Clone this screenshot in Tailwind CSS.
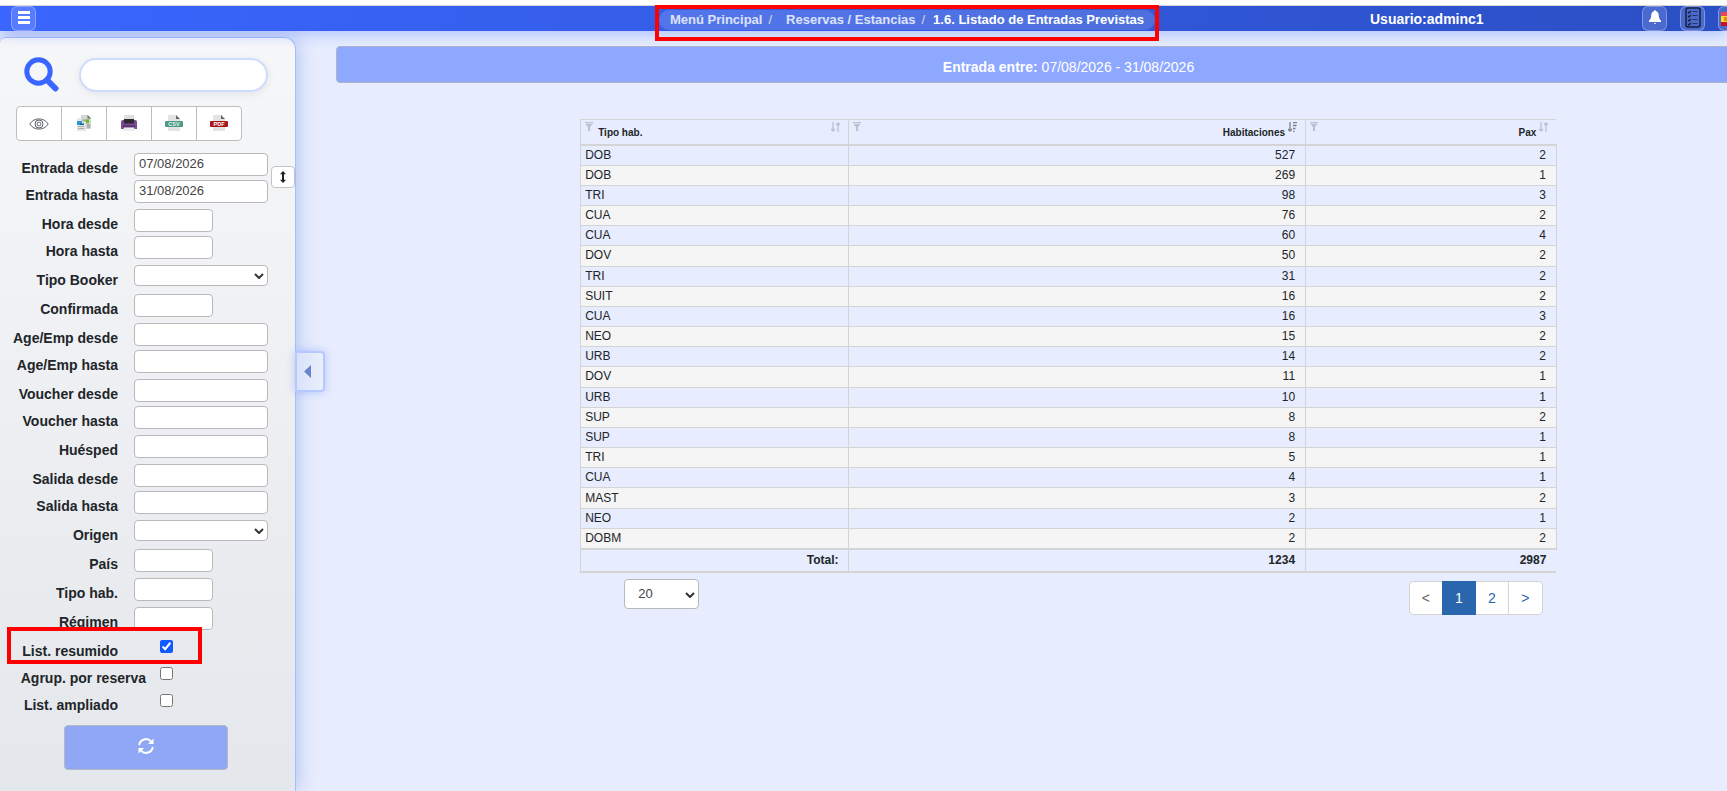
<!DOCTYPE html>
<html lang="es">
<head>
    <meta charset="UTF-8">
    <meta name="viewport" content="width=device-width, initial-scale=1.0">
    <title>Listado de Entradas Previstas</title>
    <script src="https://cdn.jsdelivr.net/npm/@tailwindcss/browser@4"></script>
</head>
<body class="min-h-screen flex flex-col overflow-x-hidden bg-[#e7edfe] text-[#212529] font-['Liberation_Sans',Arial,sans-serif]">

    <!-- Top bar -->
    <header class="relative z-10 border-t-[5px] border-white shadow-[0_4px_14px_rgba(56,98,255,0.3)]">
        <div class="h-[26px] border-t border-[#d6d6d6] grid grid-cols-[659fr_496px_215fr_272fr_85px] bg-linear-to-r from-[#3a66ff] to-[#2b4fc4] text-white font-bold">
            <div class="pl-[11px]">
                <button aria-label="Menú" class="size-[25px] rounded-md border border-white/30 bg-white/15 flex justify-center pt-1">
                    <svg class="w-3 h-[13px]" viewBox="0 0 12 13" fill="#fff"><path d="M0 0h12v3H0zM0 5h12v3H0zM0 10h12v3H0z"/></svg>
                </button>
            </div>
            <nav aria-label="Ruta" class="relative h-[25px] pt-1">
                <div class="h-5 rounded-full bg-white/15 pl-[11px] flex items-center text-[13px] leading-5 whitespace-nowrap">
                    <a href="#" class="text-white/80">Menú Principal</a>
                    <span class="pl-1.5 pr-3.5 font-normal text-[#dcdcdc]">/</span>
                    <a href="#" class="text-white/80">Reservas / Estancias</a>
                    <span class="pl-1.5 pr-2 font-normal text-[#dcdcdc]">/</span>
                    <span>1.6. Listado de Entradas Previstas</span>
                </div>
                <div class="absolute -left-1 -right-1 -top-px h-9 border-4 border-[#ff0000] pointer-events-none"></div>
            </nav>
            <div></div>
            <div class="text-sm leading-[26px] whitespace-nowrap"><span>Usuario:</span><span>adminc1</span></div>
            <div class="flex gap-[13px] overflow-hidden">
                <button aria-label="Avisos" class="size-[25px] shrink-0 rounded-md border border-white/30 bg-white/15 flex justify-center pt-[3px]">
                    <svg class="w-3 h-[15px]" viewBox="0 0 12 15" fill="#fff"><path d="M6 0c.5 0 .8.400.9 1C9 1.600 9.700 3.300 9.800 5.500c.1 2.500.8 4 2.200 5V12H0v-1.500c1.400-1 2.100-2.500 2.200-5C2.300 3.300 3 1.600 5.100 1 5.200.400 5.500 0 6 0zM5 13h2a1 1 0 0 1-2 0z"/></svg>
                </button>
                <button aria-label="Tareas" class="size-[25px] shrink-0 rounded-md border border-white/30 bg-white/15 flex justify-center">
                    <svg class="w-4 h-[21px]" viewBox="0 0 16 21" fill="none" stroke="#16213f"><rect x="1" y="1" width="14" height="19" rx="2" stroke-width="1.500"/><path d="M3 5l1 1 2-2M3 9l1 1 2-2M3 13l1 1 2-2M3 17l1 1 2-2" stroke-width="1.300"/><path d="M7.500 4.500h5M7.500 8.500h5M7.500 12.500h5M7.500 16.500h5" stroke-opacity=".7"/></svg>
                </button>
                <button aria-label="Idioma" class="size-[25px] shrink-0 rounded-md border border-white/30 bg-white/15 flex justify-end pt-[5px]">
                    <svg class="w-[21px] h-[14px]" viewBox="0 0 21 14"><path d="M0 0h21v14H0z" fill="#ffd91a"/><path d="M0 0h21v4H0z" fill="#ee4455"/><path d="M0 10h21v4H0z" fill="#c8102e"/><path d="M3 5h4v4H3z" fill="#d98a1a"/></svg>
                </button>
            </div>
        </div>
    </header>

    <div class="flex-1 flex">
        <!-- Search panel -->
        <aside class="relative mt-1.5 w-[296px] shrink-0 rounded-tr-xl rounded-tl-md border-t border-r border-[#a6bdff] bg-linear-to-b from-[#f6f7f9] to-[#e4e7eb] shadow-[2px_0_18px_rgba(56,98,200,0.3)] pb-5">
            <div class="flex items-center pl-6 pt-[19px]">
                <svg class="size-[35px] shrink-0" viewBox="0 0 35 35" fill="none" stroke="#3a66ff"><circle cx="14.500" cy="14.500" r="11.700" stroke-width="5"/><path d="M23 23l8.500 8.500" stroke-width="6" stroke-linecap="round"/></svg>
                <input type="search" aria-label="Buscar" class="ml-5 w-[189px] h-[34px] rounded-full border-2 border-[#d0dcff] bg-white px-3 text-sm shadow-[0_2px_8px_rgba(0,0,0,0.08)]">
            </div>

            <div class="mt-3.5 ml-4 w-[226px] h-[35px] flex rounded border border-[#bdbdbd] bg-white divide-x divide-[#bdbdbd]">
                <button aria-label="Ver" class="flex-1 flex items-center justify-center">
                    <svg class="w-5 h-3.5" viewBox="0 0 20 14" fill="none" stroke="#59606b"><path d="M.8 7C5 .2 15 .2 19.200 7 15 13.800 5 13.800.8 7z"/><circle cx="10" cy="7" r="4"/><rect x="8.300" y="5.300" width="3.400" height="3.400" rx="1"/></svg>
                </button>
                <button aria-label="Copiar" class="flex-1 flex items-center justify-center">
                    <svg class="w-4 h-[17px]" viewBox="0 0 16 17"><path d="M5 0h7l3 3v11H5z" fill="#d3d6d6"/><path d="M11.500 0L15 3.500h-3.500z" fill="#6e6e6e"/><path d="M7 5l6-1v4l-6 1z" fill="#6cc024"/><path d="M11 9h3v4h-3z" fill="#aeb2b4"/><path d="M1 3h6l3 3.500V16H1z" fill="#e3e6e7"/><path d="M6.500 3L10 6.500H6.500z" fill="#a3a6a8"/><path d="M1 6h5v4H1z" fill="#2f95cf"/><path d="M4 8.500h4V10H4z" fill="#125f93"/><path d="M2 11.500h6M2 13.500h6" stroke="#a9adb0"/></svg>
                </button>
                <button aria-label="Imprimir" class="flex-1 flex items-center justify-center">
                    <svg class="w-4 h-[17px]" viewBox="0 0 16 17"><path d="M3 0h10v5H3z" fill="#dedede"/><path d="M0 7q0-2 2-2h12q2 0 2 2v7H0z" fill="#7a4a94"/><path d="M3 4h10v4.500H3z" fill="#2c2a2e"/><path d="M2 10.500h12V12H2z" fill="#54306a"/><path d="M3 12.500h10l1 3.500H2z" fill="#ececec"/></svg>
                </button>
                <button aria-label="Exportar CSV" class="flex-1 flex items-center justify-center">
                    <svg class="w-[18px] h-[17px]" viewBox="0 0 18 17"><path d="M3 0h8l4 4v12H3z" fill="#e2e4e4"/><path d="M11 0l4 4h-4z" fill="#666"/><rect y="6" width="18" height="6" rx="1" fill="#4f9a84"/><text x="9" y="11" font-size="5.500" font-weight="700" text-anchor="middle" fill="#e4f3ee">CSV</text></svg>
                </button>
                <button aria-label="Exportar PDF" class="flex-1 flex items-center justify-center">
                    <svg class="w-[18px] h-[17px]" viewBox="0 0 18 17"><path d="M3 0h8l4 4v12H3z" fill="#e2e4e4"/><path d="M11 0l4 4h-4z" fill="#666"/><rect y="6" width="18" height="6" rx="1" fill="#a81717"/><text x="9" y="11" font-size="5.500" font-weight="700" text-anchor="middle" fill="#fff">PDF</text></svg>
                </button>
            </div>

            <form id="filtros" class="mt-3" onsubmit="return false">
                <div class="flex items-start">
                    <div>
                        <div class="flex h-[23px] mb-1">
                            <label for="entradaDesde" class="w-[118px] pt-1 text-right text-sm leading-[22px] font-bold">Entrada desde</label>
                            <input id="entradaDesde" type="text" value="07/08/2026" class="ml-4 w-[134px] h-[23px] rounded border border-[#b9b9b9] bg-white px-1 pb-0.5 text-[13px] text-[#444]">
                        </div>
                        <div class="flex h-[23px] mb-1.5">
                            <label for="entradaHasta" class="w-[118px] pt-1 text-right text-sm leading-[22px] font-bold">Entrada hasta</label>
                            <input id="entradaHasta" type="text" value="31/08/2026" class="ml-4 w-[134px] h-[23px] rounded border border-[#b9b9b9] bg-white px-1 pb-0.5 text-[13px] text-[#444]">
                        </div>
                    </div>
                    <button type="button" aria-label="Igualar fechas" class="mt-[13px] ml-[3px] w-6 h-[22px] rounded border border-[#c4c4c4] bg-white flex items-center justify-center">
                        <svg class="w-1.5 h-3" viewBox="0 0 6 12" fill="#222"><path d="M3 0l3 3.300H4v5.400h2L3 12 0 8.700h2V3.300H0z"/></svg>
                    </button>
                </div>
                <div id="campos"></div>

                <div class="relative flex h-[23px] mb-1">
                    <label for="resumido" class="w-[118px] pt-1 text-right text-sm leading-[22px] font-bold">List. resumido</label>
                    <input id="resumido" type="checkbox" checked class="ml-[42px] mt-1 size-[13px] accent-[#1259ff]">
                    <div class="absolute left-[7px] -top-[9px] w-[195px] h-[37px] border-4 border-[#ff0000] pointer-events-none"></div>
                </div>
                <div class="flex h-[23px] mb-1">
                    <label for="agrupado" class="w-[146px] pt-1 text-right text-sm leading-[22px] font-bold">Agrup. por reserva</label>
                    <input id="agrupado" type="checkbox" class="ml-3.5 mt-1 size-[13px]">
                </div>
                <div class="flex h-[23px]">
                    <label for="ampliado" class="w-[118px] pt-1 text-right text-sm leading-[22px] font-bold">List. ampliado</label>
                    <input id="ampliado" type="checkbox" class="ml-[42px] mt-1 size-[13px]">
                </div>

                <button aria-label="Actualizar" class="mt-3 ml-16 w-[164px] h-[45px] rounded border border-[#b5b9c6] bg-[#8fa7f5] flex items-center justify-center pb-1">
                    <svg class="size-4" viewBox="0 0 16 16" fill="none" stroke="#fff" stroke-width="2"><path d="M1.200 7A6.800 6.800 0 0 1 13 3.400M14.800 9A6.800 6.800 0 0 1 3 12.600"/><path d="M15.500.5V6H10zM.5 15.500V10H6z" fill="#fff" stroke="none"/></svg>
                </button>
            </form>

            <button aria-label="Ocultar panel" class="absolute left-full top-[313px] w-[30px] h-[41px] rounded-r border-2 border-[#b5c8ff] bg-linear-to-r from-[#d9e2fa] to-[#eaeffb] flex items-center pl-[7px] shadow-[0_0_8px_rgba(56,98,255,0.3)]">
                <svg class="w-[7px] h-[13px]" viewBox="0 0 7 13" fill="#6a84cc"><path d="M7 0v13L0 6.500z"/></svg>
            </button>
        </aside>

        <!-- Results, the panel runs past the right edge of the window -->
        <main class="ml-10 mt-[15px] w-[calc(100vw-262px)] shrink-0">
            <div class="h-[37px] rounded border border-[#b0b5c6] bg-[#8fa8ff] text-center text-sm leading-10 text-white"><b>Entrada entre:</b> 07/08/2026 - 31/08/2026</div>

            <div class="w-2/3 mx-auto mt-9">
                <table class="w-full h-[454px] table-fixed border-collapse text-xs leading-[19px]">
                    <colgroup>
                        <col class="w-[27.5%]">
                        <col class="w-[46.8%]">
                        <col>
                    </colgroup>
                    <thead>
                        <tr class="h-[25px] text-[10px] leading-[18px] border-t border-b-2 border-[#d4d4d4]">
                            <th class="border-l border-[#d4d4d4] p-0">
                                <div class="flex items-start px-1">
                                    <svg class="w-2 h-[9px]" viewBox="0 0 8 9" fill="#b9c0d0"><path d="M0 0h8v1.200H0zM.5 2h7L5 5v4H3V5z"/></svg>
                                    <span class="ml-[5px] pt-0.5">Tipo hab.</span>
                                    <svg class="ml-auto mr-1 w-[9px] h-[10px]" viewBox="0 0 9 10" fill="none" stroke="#b9c0d0" stroke-width="1.300"><path d="M2 0v9M0 7l2 2 2-2M7 10V1M5 3l2-2 2 2"/></svg>
                                </div>
                            </th>
                            <th class="border-l border-[#d4d4d4] p-0">
                                <div class="flex items-start px-1">
                                    <svg class="w-2 h-[9px]" viewBox="0 0 8 9" fill="#b9c0d0"><path d="M0 0h8v1.200H0zM.5 2h7L5 5v4H3V5z"/></svg>
                                    <span class="ml-auto pt-0.5">Habitaciones</span>
                                    <svg class="ml-[3px] mr-1 w-[9px] h-[10px]" viewBox="0 0 9 10" fill="none" stroke="#7b808c" stroke-width="1.300"><path d="M2 0v9M0 7l2 2 2-2M5 .5h4M5 3.500h3.500M5 6.500h2.500M5 9.500h1.500"/></svg>
                                </div>
                            </th>
                            <th class="border-l border-[#d4d4d4] p-0">
                                <div class="flex items-start px-1">
                                    <svg class="w-2 h-[9px]" viewBox="0 0 8 9" fill="#b9c0d0"><path d="M0 0h8v1.200H0zM.5 2h7L5 5v4H3V5z"/></svg>
                                    <span class="ml-auto pt-0.5">Pax</span>
                                    <svg class="ml-[3px] mr-1 w-[9px] h-[10px]" viewBox="0 0 9 10" fill="none" stroke="#b9c0d0" stroke-width="1.300"><path d="M2 0v9M0 7l2 2 2-2M7 10V1M5 3l2-2 2 2"/></svg>
                                </div>
                            </th>
                        </tr>
                    </thead>
                    <tbody id="filas"></tbody>
                    <tfoot>
                        <tr class="h-[23px] border-y-2 border-[#d4d4d4] text-right font-bold">
                            <td class="border-l border-[#d4d4d4] py-0 pl-0 pr-2.5">Total:</td>
                            <td class="border-l border-[#d4d4d4] py-0 pl-0 pr-2.5">1234</td>
                            <td class="border-l border-[#d4d4d4] py-0 pl-0 pr-2.5">2987</td>
                        </tr>
                    </tfoot>
                </table>

                <div class="mt-1.5 flex justify-between pl-11 pr-3.5">
                    <div class="relative">
                        <select aria-label="Filas por página" class="appearance-none w-[75px] h-[30px] rounded border border-[#b9b9b9] bg-white pl-[13px] text-[13px] text-[#444]"><option>20</option><option>50</option></select>
                        <svg class="absolute right-1 top-[13px] w-2.5 h-1.5 pointer-events-none" viewBox="0 0 10 6" fill="none" stroke="#333" stroke-width="2"><path d="M1 1l4 4 4-4"/></svg>
                    </div>
                    <nav aria-label="Paginación" class="mt-0.5 flex h-[34px] rounded border border-[#d4d4d4] bg-white text-center text-sm leading-8 text-[#2a66ad]">
                        <a href="#" class="w-8 text-[#666]">&lt;</a>
                        <a href="#" aria-current="page" class="-my-px h-[34px] w-[34px] bg-[#2a66ad] leading-[34px] text-white">1</a>
                        <a href="#" class="w-8">2</a>
                        <a href="#" class="w-[34px] border-l border-[#d4d4d4]">&gt;</a>
                    </nav>
                </div>
            </div>
        </main>
    </div>

    <script>
        // etiqueta, tipo (corto, largo, lista), va unido a la fila siguiente
        const campos = [
            ['Hora desde', 'corto', true], ['Hora hasta', 'corto'],
            ['Tipo Booker', 'lista'], ['Confirmada', 'corto'],
            ['Age/Emp desde', 'largo', true], ['Age/Emp hasta', 'largo'],
            ['Voucher desde', 'largo', true], ['Voucher hasta', 'largo'],
            ['Huésped', 'largo'],
            ['Salida desde', 'largo', true], ['Salida hasta', 'largo'],
            ['Origen', 'lista'], ['País', 'corto'], ['Tipo hab.', 'corto'], ['Régimen', 'corto']
        ];

        function control(tipo, id) {
            if (tipo === 'lista') {
                return `
                    <div class="relative ml-4">
                        <select id="${id}" class="block appearance-none w-[134px] h-[21px] rounded border border-[#b9b9b9] bg-white"><option></option></select>
                        <svg class="absolute right-1 top-2 w-2.5 h-1.5 pointer-events-none" viewBox="0 0 10 6" fill="none" stroke="#333" stroke-width="2"><path d="M1 1l4 4 4-4"/></svg>
                    </div>`;
            }
            const ancho = tipo === 'corto' ? 'w-[79px]' : 'w-[134px]';
            return `<input id="${id}" type="text" class="ml-4 ${ancho} h-[23px] rounded border border-[#b9b9b9] bg-white px-1 text-[13px]">`;
        }

        document.getElementById('campos').innerHTML = campos.map(([texto, tipo, unido], i) => `
            <div class="flex h-[23px] ${unido ? 'mb-1' : 'mb-1.5'}">
                <label for="campo${i}" class="w-[118px] pt-1 text-right text-sm leading-[22px] font-bold">${texto}</label>
                ${control(tipo, 'campo' + i)}
            </div>`).join('');

        const filas = [
            ['DOB', 527, 2], ['DOB', 269, 1], ['TRI', 98, 3], ['CUA', 76, 2], ['CUA', 60, 4],
            ['DOV', 50, 2], ['TRI', 31, 2], ['SUIT', 16, 2], ['CUA', 16, 3], ['NEO', 15, 2],
            ['URB', 14, 2], ['DOV', 11, 1], ['URB', 10, 1], ['SUP', 8, 2], ['SUP', 8, 1],
            ['TRI', 5, 1], ['CUA', 4, 1], ['MAST', 3, 2], ['NEO', 2, 1], ['DOBM', 2, 2]
        ];

        document.getElementById('filas').innerHTML = filas.map(([tipo, hab, pax]) => `
            <tr class="even:bg-[#f5f5f5]">
                <td class="border border-[#d4d4d4] py-0 px-1">${tipo}</td>
                <td class="border border-[#d4d4d4] py-0 pl-0 pr-2.5 text-right">${hab}</td>
                <td class="border border-[#d4d4d4] py-0 pl-0 pr-2.5 text-right">${pax}</td>
            </tr>`).join('');
    </script>
</body>
</html>
